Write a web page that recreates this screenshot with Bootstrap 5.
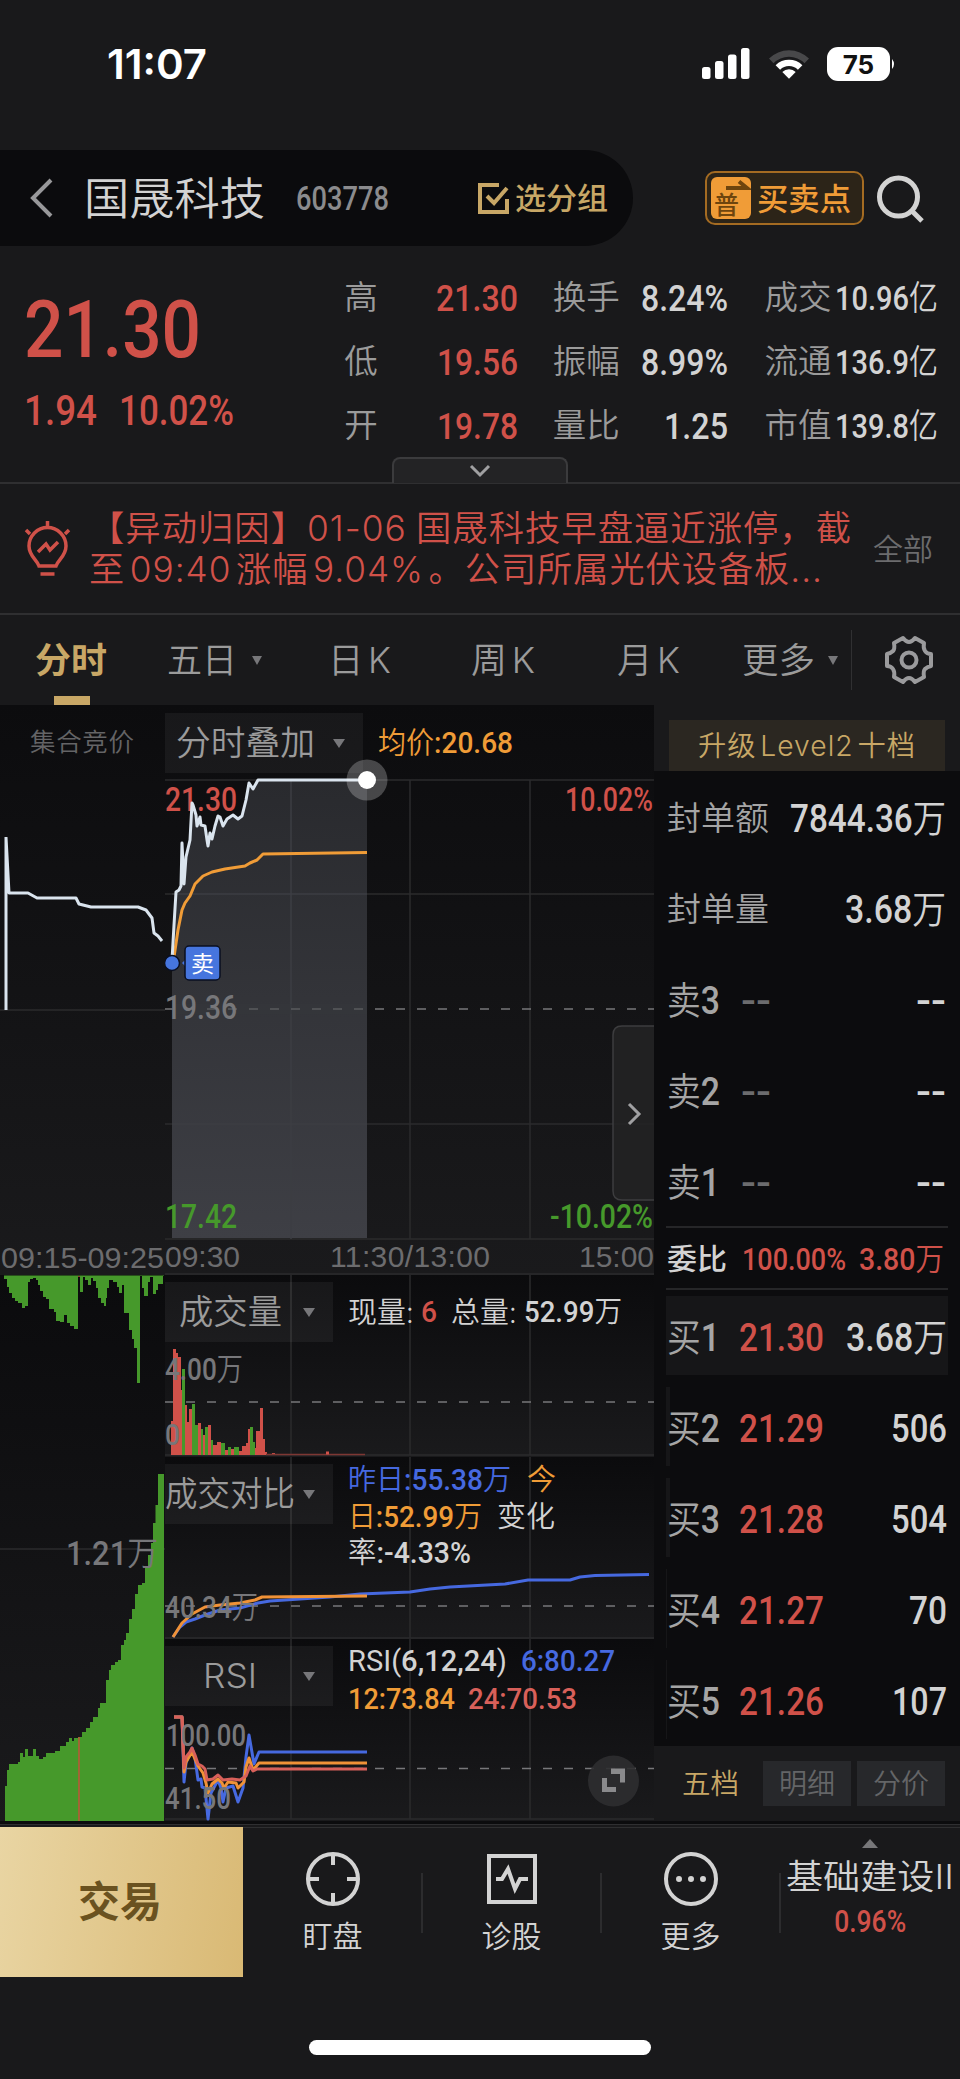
<!DOCTYPE html>
<html lang="zh-CN" data-bs-theme="dark">
<head>
<meta charset="utf-8">
<meta name="viewport" content="width=device-width, initial-scale=1">
<title>国晟科技 603778</title>
<link rel="stylesheet" href="https://cdn.jsdelivr.net/npm/bootstrap@5.3.0/dist/css/bootstrap.min.css">
<style>
:root{--bg:#19191b;--deep:#0b0b0d;--line:#2f2f31;--gold:#c8a766;--up:#d05149;--down:#46992b;--amber:#f09c37;--blue:#4669e0;--txt:#d3d3d3;--mut:#9b9b9b;--dim:#6c6c6e}
body{width:960px;height:2079px;margin:0;background:var(--bg);color:var(--txt);font-family:Inter,"Noto Sans CJK SC",sans-serif;font-weight:350;line-height:1;overflow:hidden}
svg{display:block;flex:none}
.n,text.n{font-family:Roboto,"Noto Sans CJK SC",sans-serif;font-weight:500}
.n i{font-style:normal;font-weight:350}
.fit{display:inline-block;white-space:nowrap;transform-origin:0 50%;flex:none}
.lt{margin:0 .13em}
.up{color:var(--up)}.mut{color:var(--mut)}.dim{color:var(--dim)}.gold{color:var(--gold)}.amber{color:var(--amber)}.blue{color:var(--blue)}
.status{height:150px;padding:47px 64px 0 107px}
.clock{font-size:41px;font-weight:600;line-height:34px}
.head{height:96px}
.pill{width:633px;background:var(--deep);border-radius:0 48px 48px 0;padding:0 25px 0 30px}
.name{font-size:44px;line-height:96px;margin-left:30px;padding-top:2px}
.code{font-size:33px;color:#8b8b8d;margin-left:31px;padding-top:1px}
.group{font-size:30px;font-weight:500;margin-left:6px}
.trade{width:159px;height:54px;margin-left:72px;border:2px solid #a46b22;border-radius:10px;background:#2c2418;padding-left:4px;font-size:31px;font-weight:500}
.pu{width:40px;height:42px;border-radius:6px;background:var(--amber);color:#6e450e;margin-right:6px}
.quote{height:236px;padding:20px 22px 0 24px}
.big{font-size:80px;line-height:60px;margin-top:34px}
.chg{font-size:42px;line-height:36px;margin-top:33px}
.kv{height:64px}
.kv .k{font-size:33.5px;color:var(--mut)}.kv .n{font-size:37px}
.kv .s{font-size:34px}
.pull{left:392px;bottom:-1px;width:176px;height:26px;background:#232325;border:2px solid #3b3b3d;border-bottom:0;border-radius:8px 8px 0 0}
.news{height:133px;border-top:2px solid var(--line);border-bottom:2px solid var(--line)}
.newstxt{font-size:35px;letter-spacing:1px;line-height:41.5px;margin-left:18px;margin-top:1px;width:770px;color:var(--up)}
.tabs{height:90px;font-size:35px;color:var(--mut)}
.tri{width:0;height:0;border:5px solid transparent;border-top:9px solid #77777a;border-bottom:0}
.tri.lg{border-width:9px 6px 0}
.main{height:1116px}
.side{width:306px;background:#0c0c0e}
.main .col-a{width:165px}.main .col-b{width:489px}
.price-a,.price-b{height:570px;background:linear-gradient(#0c0c0e,#1a1a1c)}
.panel{background:linear-gradient(#0b0b0d,#1a1a1c);position:relative}
.panel>svg,.price-b>svg{position:absolute;left:0;top:0}
.sel{background:rgba(255,255,255,.05);height:60px;color:var(--mut);position:relative;font-size:34px}
.legend{font-size:29px;position:relative}
.legend .n{font-size:29px}
.lv{background:#2b2721;margin:15px 15px 0;height:51px;color:var(--gold);font-size:28px;letter-spacing:1px;padding-top:1px}
.row-q{height:91px;padding:4px 14px 0 13px}
.row-q .k{font-size:33.5px;color:#a5a5a5}.row-q .n{font-size:38px}
.row-q.hl{height:79px;padding:4px 1px 0 1px}
.tabbtn{width:88px;height:45px;background:#27282b;color:#646567;font-size:28px}
.foot{height:153px;border-top:1px solid var(--line)}
.deal{width:243px;background:linear-gradient(100deg,#e9d5a3,#d9b974);color:#6a5220;font-size:42px;font-weight:700;padding-right:3px}
.fi{width:179px;font-size:30px;position:relative}
.fi::after{content:"";position:absolute;right:-1px;top:45px;height:60px;width:2px;background:#2c2c2e}
.home{width:342px;height:15px;border-radius:8px;background:#fff;margin:63px auto 0}
.g line,.g path{stroke:#2b2b2d;stroke-width:1.5}
.dash{stroke:#77777a!important;stroke-dasharray:9 12}
.ln{fill:none;stroke-width:3;stroke-linejoin:round}
</style>
</head>
<body>
<header class="status d-flex justify-content-between">
  <span class="clock text-white fit" data-w="100">11:07</span>
  <div class="d-flex align-items-start">
    <svg width="50" height="34" fill="#fff"><rect x="1" y="20" width="8.500" height="12" rx="2.500"/><rect x="14" y="14" width="8.500" height="18" rx="2.500"/><rect x="27" y="7.500" width="8.500" height="24.500" rx="2.500"/><rect x="40" y="1" width="8.500" height="31" rx="2.500"/></svg>
    <svg class="ms-3" width="44" height="34" viewBox="0 0 44 34" fill="#fff"><path fill="#48484a" d="M2 11.500a28.500 28.500 0 0 1 40 0l-4.500 4.700a22 22 0 0 0-31 0z"/><path d="M8.600 18.200a19 19 0 0 1 26.800 0l-4.500 4.600a12.600 12.600 0 0 0-17.800 0z"/><path d="M15.300 25a9.600 9.600 0 0 1 13.400 0L22 31.800z"/></svg>
    <svg class="ms-3" width="69" height="34"><rect x="0" y="0" width="63" height="34" rx="11" fill="#fff"/><path d="M65 12q4 5 0 10z" fill="#fff"/><text x="31.500" y="26.500" font-size="26" font-weight="700" text-anchor="middle" fill="#111">75</text></svg>
  </div>
</header>

<nav class="head d-flex align-items-center">
  <div class="pill h-100 d-flex align-items-center">
    <svg width="24" height="40" fill="none" stroke="#98989a" stroke-width="4"><path d="M21 2 3 20l18 18"/></svg>
    <span class="name fit" data-w="181">国晟科技</span>
    <span class="code n fit" data-w="93">603778</span>
    <svg class="ms-auto" width="31" height="31" fill="none" stroke="#c8a766" stroke-width="4"><path d="M21 2H2v27h27V16"/><path d="m9 13 7 7L29 5"/></svg>
    <span class="group gold fit" data-w="93">选分组</span>
  </div>
  <div class="trade amber d-flex align-items-center">
    <svg class="pu" viewBox="0 0 40 42"><path d="M15 11h21l-8-6.500" fill="none" stroke="#6e450e" stroke-width="4"/><text x="3" y="37" font-size="25" font-weight="500" fill="#6e450e">普</text></svg>
    <span class="fit" data-w="94">买卖点</span>
  </div>
  <svg class="ms-2 mt-2" width="56" height="56" fill="none" stroke="#d3d3d3" stroke-width="5"><circle cx="26.500" cy="23" r="19"/><path d="m39 36 11 11"/></svg>
</nav>

<section class="quote position-relative d-flex">
  <div style="width:321px">
    <div class="big up n"><span class="fit" data-w="177">21.30</span></div>
    <div class="chg up n"><span class="fit" data-w="73">1.94</span><span class="fit" style="margin-left:22px" data-w="115">10.02%</span></div>
  </div>
  <div style="width:174px">
    <div class="kv d-flex align-items-center justify-content-between"><span class="k">高</span><span class="n up fit" data-w="82">21.30</span></div>
    <div class="kv d-flex align-items-center justify-content-between"><span class="k">低</span><span class="n up fit" data-w="81">19.56</span></div>
    <div class="kv d-flex align-items-center justify-content-between"><span class="k">开</span><span class="n up fit" data-w="81">19.78</span></div>
  </div>
  <div style="width:176px;margin-left:35px">
    <div class="kv d-flex align-items-center justify-content-between"><span class="k">换手</span><span class="n fit" data-w="87">8.24%</span></div>
    <div class="kv d-flex align-items-center justify-content-between"><span class="k">振幅</span><span class="n fit" data-w="87">8.99%</span></div>
    <div class="kv d-flex align-items-center justify-content-between"><span class="k">量比</span><span class="n fit" data-w="64">1.25</span></div>
  </div>
  <div style="width:174px;margin-left:36px">
    <div class="kv d-flex align-items-center justify-content-between"><span class="k">成交</span><span class="n s fit" data-w="103">10.96<i>亿</i></span></div>
    <div class="kv d-flex align-items-center justify-content-between"><span class="k">流通</span><span class="n s fit" data-w="103">136.9<i>亿</i></span></div>
    <div class="kv d-flex align-items-center justify-content-between"><span class="k">市值</span><span class="n s fit" data-w="103">139.8<i>亿</i></span></div>
  </div>
  <div class="pull position-absolute d-flex justify-content-center align-items-center"><svg width="22" height="14" fill="none" stroke="#a0a0a2" stroke-width="3"><path d="m2 2 9 9 9-9"/></svg></div>
</section>

<section class="news d-flex align-items-center" style="padding-left:24px">
  <svg width="47" height="58" viewBox="0 0 47 58" fill="none" stroke="#d05149" stroke-width="3.500"><path d="M15 46h17c2-6 10-10 10-20a18.500 18.500 0 0 0-37 0c0 10 8 14 10 20z"/><path d="M16.500 54h14M23.500 1v5M2 10l4 4M45 10l-4 4"/><path d="m14 32 8-8 4 6 8-8"/></svg>
  <div class="newstxt"><div><span class="fit" data-w="763">【异动归因】01-06<span class="lt"></span>国晟科技早盘逼近涨停，截</span></div><div><span class="fit" data-w="734">至<span class="lt">09:40</span>涨幅<span class="lt">9.04%</span>。公司所属光伏设备板...</span></div></div>
  <span class="dim" style="font-size:30px;margin-left:14px">全部</span>
</section>

<nav class="tabs d-flex align-items-center position-relative">
  <span class="gold fw-bold fit" style="margin-left:35px" data-w="72">分时</span>
  <span class="fit" style="margin-left:60px" data-w="70">五日</span><span class="tri" style="margin-left:15px"></span>
  <span class="fit" style="margin-left:66px" data-w="63">日<span class="lt me-0">K</span></span>
  <span class="fit" style="margin-left:80px" data-w="64">周<span class="lt me-0">K</span></span>
  <span class="fit" style="margin-left:82px" data-w="63">月<span class="lt me-0">K</span></span>
  <span class="fit" style="margin-left:62px" data-w="73">更多</span><span class="tri" style="margin-left:13px"></span>
  <span style="width:1px;height:60px;background:#303032;margin-left:13px"></span>
  <svg style="margin-left:32px" width="50" height="50" viewBox="-25 -25 50 50" fill="none" stroke="#9b9b9d" stroke-width="4" stroke-linejoin="round"><circle r="7.500"/><path d="M-6-22Q-3-18 0-18T6-22L15-17Q14-12 16-9T22-6V6Q18 7 16 9T15 17L6 22Q3 18 0 18T-6 22L-15 17Q-14 12-16 9T-22 6V-6Q-18-7-16-9T-15-17Z"/></svg>
  <span class="position-absolute" style="left:54px;bottom:0;width:36px;height:9px;background:var(--gold)"></span>
</nav>

<main class="main d-flex">
  <div class="col-a">
    <div class="price-a">
      <svg width="165" height="570" viewBox="0 705 165 570"><text x="30" y="751" font-size="25.500" fill="#646466" textLength="104">集合竞价</text>
        <g class="g"><path d="M0 1010H165"/></g><path class="ln" stroke="#dae4ee" d="M6 837V1010M6 837 9 893H28L37 898H76L79 904 91 907H138L146 910 152 918 154 933 158 936 162 941"/>
        <text x="1" y="1268" font-family="Liberation Sans" font-size="30" fill="#6c6c6e" textLength="163" lengthAdjust="spacingAndGlyphs">09:15-09:25</text></svg>
    </div>
    <div class="panel"><svg class="position-static" width="165" height="546" viewBox="0 1275 165 546"><g class="g"><path d="M0 1549H165"/></g><path id="hang" fill="#46992b"/><path id="cum" fill="#46992b"/><path d="M79 1276v1M79 1737V1821" stroke="#c0543a" stroke-width="1.500"/><text class="n" x="66" y="1565" font-size="33" fill="#77777a" textLength="92" lengthAdjust="spacingAndGlyphs">1.21<tspan font-weight="350">万</tspan></text></svg></div>
  </div>

  <div class="col-b">
    <div class="price-b position-relative">
      <svg width="489" height="570" viewBox="165 705 489 570">
        <defs><linearGradient id="ar" x1="0" y1="0" x2="0" y2="1"><stop stop-color="#292a2e"/><stop offset="1" stop-color="#3e3f45"/></linearGradient></defs>
        <path fill="url(#ar)" id="area"/>
        <g class="g"><path d="M165 780H654M165 894H172M367 894H654M165 1124H172M367 1124H654M165 1239H654M165 1274H654M410 780V1239M530 780V1239"/><path style="stroke:#3d3e43" d="M172 894H367M172 1124H367M291 780V1239"/><path class="dash" d="M165 1009H654"/></g>
        <rect x="172" y="1004" width="195" height="10" fill="#36373b" opacity=".45"/>
        <g class="n"><text class="n" x="165" y="811" font-size="33" fill="#d05149" textLength="72" lengthAdjust="spacingAndGlyphs">21.30</text>
        <text class="n" x="565" y="811" font-size="33" fill="#d05149" textLength="88" lengthAdjust="spacingAndGlyphs">10.02%</text>
        <text class="n" x="165" y="1019" font-size="33" fill="#77777a" textLength="72" lengthAdjust="spacingAndGlyphs">19.36</text>
        <text class="n" x="165" y="1228" font-size="33" fill="#46992b" textLength="72" lengthAdjust="spacingAndGlyphs">17.42</text>
        <text class="n" x="550" y="1228" font-size="33" fill="#46992b" textLength="103" lengthAdjust="spacingAndGlyphs">-10.02%</text></g>
        <path class="ln" stroke="#f09c37" d="M174 957 178 930 182 910 185 903 190 896 195 884 203 876 212 872 225 869 245 866 250 863 257 860 263 854 367 852.500"/>
        <path class="ln" stroke="#dae4ee" id="px"/>
        <circle cx="367" cy="780" r="20.500" fill="#fff" opacity=".24"/><circle cx="367" cy="780" r="9" fill="#fff"/>
        <circle cx="172" cy="963" r="7.500" fill="#4675de" stroke="#0a0f20" stroke-width="1.500"/><path d="M182 963l4-4v8z" fill="#4675de"/><rect x="185" y="946" width="35" height="34" rx="4" fill="#4675de" stroke="#0a0f20" stroke-width="1.500"/><text x="191" y="972" font-size="23" font-weight="400" fill="#fff">卖</text>
        <path d="M655 1026H622q-9 0-9 9V1191q0 9 9 9h33" fill="#232325" fill-opacity=".85" stroke="#3d3d3f" stroke-width="1.500"/><path d="m629 1104 10 10-10 10" fill="none" stroke="#a0a0a2" stroke-width="3"/>
        <g font-family="Liberation Sans" font-size="30" fill="#6c6c6e"><text x="165" y="1267" textLength="75">09:30</text><text x="330" y="1267" textLength="160">11:30/13:00</text><text x="579" y="1267" textLength="75">15:00</text></g>
      </svg>
      <div class="d-flex align-items-center pt-2" style="height:68px;position:relative">
        <div class="sel d-flex align-items-center" style="width:198px;padding-left:11px"><span class="fit" data-w="139">分时叠加</span><span class="tri lg" style="margin-left:18px"></span></div>
        <span class="n amber fit" style="font-size:30px;margin-left:15px" data-w="135"><i>均价</i>:20.68</span>
      </div>
    </div>

    <div class="panel" style="height:182px">
      <svg width="489" height="182" viewBox="165 1275 489 182"><g class="g"><path d="M165 1455H654M291 1275V1455M410 1275V1455M530 1275V1455"/><path class="dash" d="M165 1402H654"/></g><path id="vr" fill="#d05149"/><path id="vg" fill="#46992b"/><path d="M266 1454.500H365" stroke="#7d3733" stroke-width="1.500"/><path d="M326 1453h3" stroke="#d05149" stroke-width="3"/>
      <text class="n" x="165" y="1380" font-size="31" fill="#77777a" textLength="78" lengthAdjust="spacingAndGlyphs">4.00<tspan font-weight="350">万</tspan></text><text class="n" x="165" y="1445" font-size="30" fill="#77777a" textLength="15" lengthAdjust="spacingAndGlyphs">0</text></svg>
      <div class="d-flex" style="padding-top:7px"><div class="sel d-flex align-items-center" style="width:168px;padding-left:14px"><span class="fit" data-w="103">成交量</span><span class="tri lg" style="margin-left:21px"></span></div>
      <div class="legend d-flex align-items-center" style="margin-left:15px"><span class="fit" data-w="66">现量:</span><span class="n up fit" style="margin-left:7px" data-w="16">6</span><span class="fit" style="margin-left:14px" data-w="66">总量:</span><span class="n fit" style="margin-left:7px" data-w="98">52.99<i>万</i></span></div></div>
    </div>

    <div class="panel" style="height:182px">
      <svg width="489" height="182" viewBox="165 1457 489 182"><g class="g"><path d="M165 1638H654M291 1457V1638M410 1457V1638M530 1457V1638"/><path class="dash" d="M165 1606H654"/></g>
      <path class="ln" stroke="#4669e0" d="M173 1637 180 1627 186 1622 195 1619 205 1615 220 1610 240 1608 258 1603 270 1601 300 1599 330 1597 360 1594 410 1592 430 1589 450 1587 505 1584 528 1580H570L580 1577 595 1575.500 649 1574.500"/><path class="ln" stroke="#f09237" d="M173 1637 182 1623 192 1614 205 1607 220 1605 240 1603 255 1600 262 1597 367 1596"/>
      <text class="n" x="165" y="1618" font-size="31" fill="#77777a" textLength="93" lengthAdjust="spacingAndGlyphs">40.34<tspan font-weight="350">万</tspan></text></svg>
      <div class="d-flex align-items-start" style="padding-top:7px"><div class="sel d-flex align-items-center" style="width:168px"><span class="fit" data-w="130">成交对比</span><span class="tri lg" style="margin-left:8px"></span></div>
      <div class="legend" style="line-height:36.500px;margin:-2px 0 0 15px"><div><span class="n blue fit" data-w="163"><i>昨日</i>:55.38<i>万</i></span><span class="amber fit" style="margin-left:16px" data-w="29">今</span></div><div><span class="n amber fit" data-w="134"><i>日</i>:52.99<i>万</i></span><span class="fit" style="margin-left:15px" data-w="58">变化</span></div><div><span class="n fit" data-w="123"><i>率</i>:-4.33%</span></div></div></div>
    </div>

    <div class="panel" style="height:182px">
      <svg width="489" height="182" viewBox="165 1639 489 182"><g class="g"><path d="M165 1819H654M291 1639V1819M410 1639V1819M530 1639V1819"/><path class="dash" d="M165 1768.500H654"/></g>
      <path class="ln" stroke="#4669e0" d="M174 1717H182L184 1782 186 1763 192 1748 195 1758 198 1780 201 1779 202 1787 205 1788 208 1819 211 1793 218 1780 221 1788 223 1802 226 1788 233 1786 238 1802 243 1788 246 1757 249 1735 254 1764 259 1752H367"/>
      <path class="ln" stroke="#f09237" d="M174 1717H182L184 1772 186 1762 192 1752 198 1766 203 1773 206 1783 208 1793 212 1784 218 1779 222 1783 224 1788 228 1782 236 1783 238 1788 244 1782 246 1767 249 1758 253 1770 259 1763H367"/>
      <path class="ln" stroke="#d8605a" d="M174 1717H182L184 1768 186 1757 190 1752 192 1748 195 1755 198 1764 202 1766 205 1769 207 1780 213 1779 218 1775 223 1780 232 1779 240 1780 246 1776 250 1766 253 1771 257 1769H367"/>
      <text class="n" x="166" y="1746" font-size="31" fill="#77777a" textLength="80" lengthAdjust="spacingAndGlyphs">100.00</text><text class="n" x="165" y="1809" font-size="31" fill="#77777a" textLength="66" lengthAdjust="spacingAndGlyphs">41.50</text>
      <circle cx="613.500" cy="1781" r="25.500" fill="#2e2e30" opacity=".9"/><path fill="#8a8a8c" d="M611 1768.500h14v14h-5v-8.500h-9zM602 1778h5v9h9v5h-14z"/></svg>
      <div class="d-flex align-items-start" style="padding-top:7px"><div class="sel d-flex align-items-center" style="width:168px;padding-left:38px"><span class="fit" data-w="54">RSI</span><span class="tri lg" style="margin-left:46px"></span></div>
      <div class="legend" style="line-height:37px;margin:-4px 0 0 15px"><div><span class="n fit" data-w="159"><i class="fw-normal">RSI(</i>6,12,24<i class="fw-normal">)</i></span><span class="n blue fit" style="margin-left:14px" data-w="94">6:80.27</span></div><div><span class="n amber fit" data-w="107">12:73.84</span><span class="n fit" style="margin-left:13px;color:#d8605a" data-w="109">24:70.53</span></div></div></div>
    </div>
  </div>

  <aside class="side d-flex flex-column">
    <div style="background:var(--bg);height:66px"><div class="lv d-flex align-items-center justify-content-center"><span class="fit" data-w="218">升级<span class="lt">Level2</span>十档</span></div></div>
    <div class="row-q d-flex align-items-center justify-content-between"><span class="k fit" data-w="102">封单额</span><span class="n fit" data-w="156">7844.36<i>万</i></span></div>
    <div class="row-q d-flex align-items-center justify-content-between"><span class="k fit" data-w="102">封单量</span><span class="n fit" data-w="101">3.68<i>万</i></span></div>
    <div class="row-q d-flex align-items-center"><span class="k n fit" data-w="53"><i>卖</i>3</span><span class="n dim fit" style="margin-left:21px" data-w="30">--</span><span class="n ms-auto fit" data-w="30">--</span></div>
    <div class="row-q d-flex align-items-center"><span class="k n fit" data-w="53"><i>卖</i>2</span><span class="n dim fit" style="margin-left:21px" data-w="30">--</span><span class="n ms-auto fit" data-w="30">--</span></div>
    <div class="row-q d-flex align-items-center"><span class="k n fit" data-w="53"><i>卖</i>1</span><span class="n dim fit" style="margin-left:21px" data-w="30">--</span><span class="n ms-auto fit" data-w="30">--</span></div>
    <div class="d-flex align-items-center" style="height:64px;margin:0 12px;border-top:2px solid #262628;border-bottom:2px solid #262628;padding:2px 0 0 1px"><span class="fit" style="font-size:29px;font-weight:500" data-w="60">委比</span><span class="n up fit" style="font-size:31px;margin-left:15px" data-w="104">100.00%</span><span class="n up fit" style="font-size:31px;margin-left:13px" data-w="85">3.80<i>万</i></span></div>
    <div id="bids"></div>
    <div class="d-flex align-items-center mt-auto" style="background:var(--bg);height:75px;padding-left:28px"><span class="gold fit" style="font-size:28px" data-w="57">五档</span><span class="tabbtn d-flex align-items-center justify-content-center" style="margin-left:24px">明细</span><span class="tabbtn d-flex align-items-center justify-content-center" style="margin-left:6px">分价</span></div>
  </aside>
</main>

<div style="height:3px;background:#0c0c0e"></div>
<footer class="foot d-flex" style="padding-top:2px">
  <div class="deal d-flex align-items-center justify-content-center"><span class="fit" data-w="84">交易</span></div>
  <div class="d-flex flex-fill" style="border-top:1px solid var(--line)">
    <div class="fi d-flex flex-column align-items-center"><svg style="margin-top:23px" width="56" height="56" fill="none" stroke="#d3d3d3" stroke-width="4"><circle cx="28" cy="28" r="25"/><path d="M28 3v11M28 42v11M3 28h11M42 28h11"/></svg><span class="fit" style="margin-top:14px" data-w="60">盯盘</span></div>
    <div class="fi d-flex flex-column align-items-center"><svg style="margin-top:23px" width="56" height="56" fill="none" stroke="#d3d3d3" stroke-width="4"><path d="M5 5h46v46H5zM12 28h6l6-10 7 20 5-10h8"/></svg><span class="fit" style="margin-top:14px" data-w="60">诊股</span></div>
    <div class="fi d-flex flex-column align-items-center"><svg style="margin-top:23px" width="56" height="56" fill="none" stroke="#d3d3d3" stroke-width="4"><circle cx="28" cy="28" r="25"/><path stroke-width="6" stroke-linecap="round" d="M16 28h0M28 28h0M40 28h0"/></svg><span class="fit" style="margin-top:14px" data-w="60">更多</span></div>
    <div class="d-flex flex-column align-items-center" style="width:180px"><svg style="margin-top:11px" width="16" height="9" fill="#77777a"><path d="M8 0l8 9H0z"/></svg><span class="fit" style="font-size:34px;margin-top:12px" data-w="168">基础建设Ⅱ</span><span class="n up fit" style="font-size:31px;margin-top:12px" data-w="72">0.96%</span></div>
  </div>
</footer>
<div class="home"></div>

<script src="https://cdn.jsdelivr.net/npm/bootstrap@5.3.0/dist/js/bootstrap.bundle.min.js"></script>
<script>
const $=id=>document.getElementById(id);
// price line and the shaded area under it
const px='172 960 174 925 176 892 179 890 181 886 182 843 184 884 186 857 190 840 192 803 193 805 196 815 197 826 200 817 201 825 205 826 207 840 208 846 210 833 212 839 215 826 218 816 220 817 223 826 227 819 233 815 238 819 242 816 246 800 249 783 253 789 258 780 367 780';
$('px').setAttribute('d','M'+px);$('area').setAttribute('d','M'+px+' V1238H172z');
// stepped histograms: [x,y, x,y ...]
const step=(base,a)=>{let d='M'+a[0]+' '+base;for(let i=0;i<a.length;i+=2)d+='H'+a[i]+'V'+a[i+1];return d+'H164V'+base+'z'};
$('hang').setAttribute('d',step(1275.5,[4,1279,7,1287,9,1293,12,1298,15,1301,18,1303,22,1308,25,1306,28,1282,30,1279,33,1278,36,1280,38,1285,40,1291,43,1297,46,1299,49,1309,54,1312,56,1321,60,1322,64,1315,67,1323,70,1326,74,1329,78,1276,80,1292,83,1277,85,1280,88,1285,91,1278,93,1281,96,1288,98,1298,101,1303,104,1306,106,1298,107,1288,109,1280,113,1282,117,1287,119,1293,122,1285,124,1313,129,1330,132,1339,134,1348,137,1383,140,1276,142,1288,144,1296,148,1282,150,1277,153,1294,156,1290,158,1284,163,1276]));
$('cum').setAttribute('d',step(1822,[5,1786,7,1770,9,1764,18,1762,20,1753,23,1757,25,1749,28,1756,33,1749,36,1756,39,1759,43,1757,46,1753,55,1751,60,1746,66,1742,69,1738,72,1741,74,1738,78,1737,82,1732,86,1728,90,1722,93,1717,98,1708,100,1703,106,1680,109,1670,111,1665,115,1662,118,1660,121,1645,124,1640,126,1633,129,1619,132,1609,135,1594,138,1585,142,1583,145,1567,148,1555,151,1543,153,1523,155.500,1505,158,1474]));
const bars=[171,1421,173,'r',173,1349,176,'r',176,1353,178,'r',178,1357,181,'r',181,1390,182,'r',182,1369,185,'g',185,1405,187,'r',187,1422,189,'r',189,1409,192,'r',192,1404,195,'g',195,1425,198,'g',198,1423,201,'r',201,1429,203,'g',203,1435,205,'r',205,1427,208,'g',208,1425,211,'r',211,1440,213,'g',213,1445,217,'r',217,1442,221,'r',221,1443,225,'g',225,1450,228,'r',228,1447,231,'g',231,1449,234,'r',234,1447,239,'g',239,1451,242,'r',242,1446,246,'r',246,1443,248,'r',248,1429,250,'r',250,1427,253,'g',253,1442,255,'g',255,1448,256,'r',256,1431,260,'r',260,1408,263,'r',263,1439,265,'r',265,1452,267,'r',272,1453,275,'r'];
const vol={r:'',g:''};for(let i=0;i<bars.length;i+=4)vol[bars[i+3]]+=`M${bars[i]} 1455V${bars[i+1]}H${bars[i+2]}V1455z`;
$('vr').setAttribute('d',vol.r);$('vg').setAttribute('d',vol.g);
// bid rows; the backdrop width follows the order size
$('bids').innerHTML=[['1','21.30','3.68<i>万</i>',282,101],['2','21.29','506',4,56],['3','21.28','504',4,56],['4','21.27','70',1,38],['5','21.26','107',1,55]].map(r=>`<div class="hl d-flex align-items-center row-q" style="margin:${r[0]==1?6:12}px 12px 0;background:linear-gradient(#161618,#161618) 0 0/${r[3]}px 100% no-repeat"><span class="k n fit" data-w="53"><i>买</i>${r[0]}</span><span class="n up fit" style="margin-left:19px" data-w="85">${r[1]}</span><span class="n ms-auto fit" data-w="${r[4]}">${r[2]}</span></div>`).join('');
// squeeze each label to its column width
document.querySelectorAll('.fit').forEach(e=>{const w=e.getBoundingClientRect().width,t=+e.dataset.w;e.style.transform=`scaleX(${t/w})`;e.style.marginRight=(t-w)+'px';if(e.parentElement.classList.contains('align-items-center')&&e.parentElement.classList.contains('flex-column')){e.style.marginRight=0;e.style.transformOrigin='50% 50%'}});
</script>
</body>
</html>
